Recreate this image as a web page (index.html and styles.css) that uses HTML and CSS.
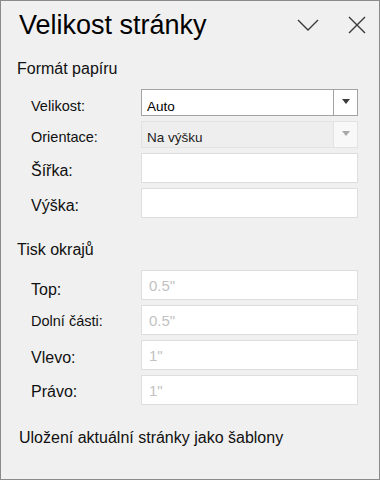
FILE: index.html
```html
<!DOCTYPE html>
<html lang="cs">
<head>
<meta charset="utf-8">
<title>Velikost stránky</title>
<link rel="stylesheet" href="styles.css">
</head>
<body>
<div class="panel">
  <div class="header">
    <h1 class="title">Velikost stránky</h1>
    <svg class="chev" width="22" height="14" viewBox="0 0 22 14"><path d="M1 2 L11 12 L21 2" fill="none" stroke="#3a3a3a" stroke-width="1.4"/></svg>
    <svg class="close" width="18" height="18" viewBox="0 0 18 18"><path d="M1 1 L17 17 M17 1 L1 17" fill="none" stroke="#3a3a3a" stroke-width="1.4"/></svg>
  </div>
  <div class="body">
    <h2 class="section">Formát papíru</h2>
    <div class="rows">
      <div class="row">
        <label class="lbl sm p10">Velikost:</label>
        <div class="select">
          <div class="select-value">Auto</div>
          <div class="select-btn"><span class="tri"></span></div>
        </div>
      </div>
      <div class="row">
        <label class="lbl sm p9">Orientace:</label>
        <div class="select disabled">
          <div class="select-value">Na výšku</div>
          <div class="select-btn"><span class="tri"></span></div>
        </div>
      </div>
      <div class="row">
        <label class="lbl p10">Šířka:</label>
        <input class="field" type="text">
      </div>
      <div class="row">
        <label class="lbl p10">Výška:</label>
        <input class="field" type="text">
      </div>
    </div>

    <h2 class="section second">Tisk okrajů</h2>
    <div class="rows">
      <div class="row">
        <label class="lbl p11">Top:</label>
        <input class="field" type="text" placeholder="0.5&quot;">
      </div>
      <div class="row">
        <label class="lbl sm p9">Dolní části:</label>
        <input class="field" type="text" placeholder="0.5&quot;">
      </div>
      <div class="row">
        <label class="lbl p10">Vlevo:</label>
        <input class="field" type="text" placeholder="1&quot;">
      </div>
      <div class="row">
        <label class="lbl p9">Právo:</label>
        <input class="field" type="text" placeholder="1&quot;">
      </div>
    </div>

    <div class="link">Uložení aktuální stránky jako šablony</div>
  </div>
</div>
</body>
</html>
```

FILE: styles.css
```css
* { box-sizing: border-box; }
html, body { margin: 0; padding: 0; }
body {
  font-family: "Liberation Sans", Arial, sans-serif;
  color: #111;
  background: #f0f0f0;
}
.panel {
  width: 380px;
  height: 480px;
  border: 1px solid #8a8a8a;
  background: #f0f0f0;
}
.header {
  display: flex;
  align-items: flex-start;
  height: 60px;
  padding: 11px 13px 0 18px;
}
.title {
  margin: 0;
  font-size: 27px;
  line-height: 27px;
  font-weight: normal;
  color: #000;
}
.chev { margin-left: auto; margin-top: 6px; }
.close { margin-left: 29px; margin-top: 4px; }

.body { padding: 0 21px 0 16px; }
.section {
  margin: 0 0 12px 0;
  font-size: 16px;
  line-height: 16px;
  font-weight: normal;
  color: #111;
}
.section.second { margin-top: 24px; }
.rows { display: flex; flex-direction: column; gap: 5px; }
.row { display: flex; align-items: flex-start; }
.lbl {
  width: 124px;
  flex: none;
  padding-left: 14px;
  font-size: 16px;
  line-height: 16px;
  color: #111;
}
.lbl.sm { font-size: 14.5px; line-height: 14.5px; }
.p9 { padding-top: 9px; }
.p10 { padding-top: 10px; }
.p11 { padding-top: 11.5px; }

.select {
  width: 217px;
  height: 27px;
  display: flex;
  border: 1px solid #a3a3a3;
  background: #fff;
}
.select-value {
  flex: 1;
  padding: 9.5px 0 0 5px;
  font-size: 13.5px;
  line-height: 13.5px;
  color: #000;
}
.select-btn {
  width: 24px;
  border-left: 1px solid #a3a3a3;
  display: flex;
  align-items: center;
  justify-content: center;
}
.tri {
  width: 0;
  height: 0;
  border-left: 4.5px solid transparent;
  border-right: 4.5px solid transparent;
  border-top: 5px solid #3c3c3c;
  margin-top: -2px;
}
.select.disabled {
  border-color: #e2e2e2;
  background: #eeeeee;
}
.select.disabled .select-value { color: #222; padding-top: 9px; }
.select.disabled .select-btn {
  border-left-color: #e2e2e2;
  background: #f8f8f8;
}
.select.disabled .tri { border-top-color: #a8a8a8; }

.field {
  width: 217px;
  height: 30px;
  margin: 0;
  border: 1px solid #dedede;
  background: #fff;
  padding: 0 7px;
  font-family: "Liberation Sans", Arial, sans-serif;
  font-size: 15px;
  color: #111;
  outline: none;
}
.field::placeholder { color: #c2c2c2; }

.link {
  margin-top: 25px;
  padding-left: 2px;
  font-size: 16px;
  line-height: 16px;
  color: #111;
}
```
